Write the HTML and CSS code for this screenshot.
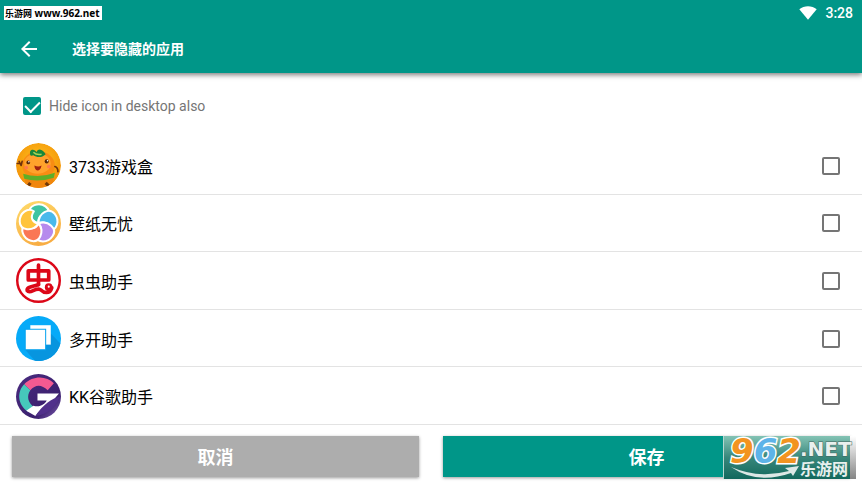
FILE: index.html
```
<!DOCTYPE html>
<html lang="zh-CN">

<head>
    <meta charset="UTF-8">
    <meta name="viewport" content="width=device-width, initial-scale=1.0">
    <title>选择要隐藏的应用</title>
    <link rel="stylesheet" href="styles.css">
</head>

<body>
    <header class="header">
        <div class="status">
            <span class="site"><span class="site-cn">乐游网</span> www.962.net</span>
            <div class="status-right">
                <svg class="wifi" viewBox="0 0 18 14" aria-hidden="true">
                    <path d="M0.3 3.2C5.2-.8 12.8-.8 17.7 3.2L9 13.8z" fill="#fff" />
                </svg>
                <span class="time">3:28</span>
            </div>
        </div>
        <div class="toolbar">
            <button type="button" class="back" aria-label="返回">
                <svg viewBox="0 0 24 24">
                    <path d="M20 11H7.83l5.59-5.59L12 4l-8 8 8 8 1.41-1.41L7.83 13H20v-2z" fill="#fff" />
                </svg>
            </button>
            <h1 class="title">选择要隐藏的应用</h1>
        </div>
    </header>

    <div class="option">
        <input type="checkbox" id="hideIcon" class="check" checked>
        <label for="hideIcon">Hide icon in desktop also</label>
    </div>

    <ul class="list">
        <li class="row">
            <svg class="icon" viewBox="0 0 44 44" aria-hidden="true">
                <defs>
                    <radialGradient id="orange" cx=".5" cy=".4" r=".6">
                        <stop offset="0" stop-color="#ffc31f" />
                        <stop offset="1" stop-color="#f39208" />
                    </radialGradient>
                    <clipPath id="round"><circle cx="22" cy="22" r="22" /></clipPath>
                </defs>
                <g clip-path="url(#round)">
                    <circle cx="22" cy="22" r="22" fill="url(#orange)" />
                    <path d="M9 31Q22 37 37 30L36 44H9z" fill="#f0860e" />
                    <ellipse cx="22" cy="22" rx="16" ry="14" fill="#f88c13" />
                    <ellipse cx="21" cy="20" rx="13" ry="10" fill="#ffa22c" />
                    <path d="M7 30Q22 35 38 29L37 34Q22 39 8 35z" fill="#5fae28" />
                    <path d="M14 12C12 5 19 6 20 9C22 4 27 7 29 11C25 15 20 14 17 12C16 12 15 13 14 12z" fill="#18873a" />
                    <path d="M17 9Q20 12 25 11" fill="none" stroke="#a6d456" stroke-width="1.5" />
                    <circle cx="12" cy="19" r="1.8" fill="#582709" />
                    <circle cx="30" cy="18" r="2" fill="#582709" />
                    <circle cx="12.6" cy="18.3" r=".7" fill="#fff" />
                    <circle cx="30.8" cy="17.3" r=".7" fill="#fff" />
                    <path d="M18 22Q22 24 25 22Q24 27 21 27Q18 26 18 22z" fill="#a22110" />
                    <circle cx="10" cy="24" r="1.8" fill="#ff7a4d" />
                    <circle cx="32" cy="23" r="1.8" fill="#ff7a4d" />
                    <path d="M5 22L3 18M4 20L1 20M5 22L6 18M38 23Q41 24 41 28" fill="none" stroke="#70310b" stroke-width="1.6" stroke-linecap="round" />
                    <path d="M12 42L14 39M29 39L32 42" stroke="#703909" stroke-width="3" />
                </g>
            </svg>
            <label class="name" for="app1">3733游戏盒</label>
            <input type="checkbox" id="app1" class="check">
        </li>
        <li class="row">
            <svg class="icon" viewBox="0 0 44 44" aria-hidden="true">
                <defs>
                    <linearGradient id="sun" x2=".4" y2="1">
                        <stop offset="0" stop-color="#ffdc6b" />
                        <stop offset="1" stop-color="#f8ad43" />
                    </linearGradient>
                    <path id="petal" d="M22 22C12 19 10 7 18 4C26 1 34 7 32 14C25 12 21 16 22 22z" />
                </defs>
                <circle cx="22" cy="22" r="22" fill="url(#sun)" />
                <g stroke="#fff" stroke-width="2" stroke-linejoin="round">
                    <use href="#petal" fill="#3fc4a2" />
                    <use href="#petal" fill="#49b9eb" transform="rotate(72 22 22)" />
                    <use href="#petal" fill="#b68aed" transform="rotate(144 22 22)" />
                    <use href="#petal" fill="#fa7755" transform="rotate(216 22 22)" />
                    <use href="#petal" fill="#ffc43c" transform="rotate(288 22 22)" />
                </g>
            </svg>
            <label class="name" for="app2">壁纸无忧</label>
            <input type="checkbox" id="app2" class="check">
        </li>
        <li class="row">
            <svg class="icon" viewBox="0 0 44 44" aria-hidden="true">
                <circle cx="22" cy="22" r="20.8" fill="#fff" stroke="#dc0718" stroke-width="2.4" />
                <g fill="none" stroke="#dc0718" stroke-width="3.6" stroke-linecap="round" stroke-linejoin="round">
                    <path d="M12 12.5H32V21.5H12zM22 7V26" />
                    <path d="M22 26C17 28 10 28 11 32C14 36 19 28 24 31C27 34 33 36 35 29" />
                </g>
                <circle cx="32" cy="28.5" r="3.8" fill="#dc0718" />
                <circle cx="32" cy="28" r="1" fill="#fff" />
            </svg>
            <label class="name" for="app3">虫虫助手</label>
            <input type="checkbox" id="app3" class="check">
        </li>
        <li class="row">
            <svg class="icon" viewBox="0 0 44 44" aria-hidden="true">
                <circle cx="22" cy="22" r="22" fill="#06aaf8" />
                <path d="M9 33L18.500 43.700A22 22 0 0 0 43.400 27L34 17L28 30z" fill="#0795df" />
                <path d="M14 9H34V28H14z" fill="#fff" />
                <path d="M9 13H29V33H9z" fill="#fff" stroke="#08a4ef" stroke-width="1" />
            </svg>
            <label class="name" for="app4">多开助手</label>
            <input type="checkbox" id="app4" class="check">
        </li>
        <li class="row">
            <svg class="icon" viewBox="0 0 44 44" aria-hidden="true">
                <defs>
                    <linearGradient id="violet" x2="1" y2="1">
                        <stop offset="0" stop-color="#4a2c80" />
                        <stop offset=".7" stop-color="#3b206e" />
                        <stop offset="1" stop-color="#8463b8" />
                    </linearGradient>
                </defs>
                <circle cx="22" cy="22" r="22" fill="url(#violet)" />
                <path d="M8 10C17 1 30 2 37 9L31 16C25 10 19 10 14 16z" fill="#f35a91" />
                <path d="M8 10L14 16C10 22 12 28 17 32L12 37C1 30 1 17 8 10z" fill="#46c8bb" />
                <path d="M21 19H42L37 25C29 30 24 35 19 41L10 36L17 31C23 33 28 30 30 26H21z" fill="#fff" />
                <path d="M43 22C35 24 26 30 19 41Q36 39 43 22z" fill="#51308b" />
            </svg>
            <label class="name" for="app5">KK谷歌助手</label>
            <input type="checkbox" id="app5" class="check">
        </li>
    </ul>

    <footer class="footer">
        <button type="button" class="btn cancel">取消</button>
        <button type="button" class="btn save">保存</button>
        <svg class="logo" viewBox="0 0 133 43" role="img" aria-label="962.NET 乐游网">
            <defs>
                <linearGradient id="panel" x2="0" y2="1">
                    <stop offset="0" stop-color="#83c3b4" />
                    <stop offset=".5" stop-color="#38877b" />
                    <stop offset="1" stop-color="#13685d" />
                </linearGradient>
                <linearGradient id="edge" x2="0" y2="1">
                    <stop offset="0" stop-color="#fff" />
                    <stop offset="1" stop-color="#858585" />
                </linearGradient>
            </defs>
            <path d="M127 0H133V43H127z" fill="url(#edge)" />
            <path d="M0 0H127V43H0z" fill="url(#panel)" />
            <path d="M.5 0V43" stroke="#b6d7d1" />
            <path d="M8 31Q36 43 66 35L62 32L76 30L70 40L68 37Q34 49 8 31z" fill="#dce7e5" />
            <text class="logo-num" x="7" y="27"><tspan fill="#f29420">9</tspan><tspan fill="#5eb3e8">6</tspan><tspan fill="#f29420">2</tspan></text>
            <text class="logo-net" x="77" y="20">.NET</text>
            <text class="logo-cn" x="77" y="39">乐游网</text>
        </svg>
    </footer>
</body>

</html>
```
FILE: styles.css
```
* {
    box-sizing: border-box;
}

body {
    margin: 0;
    min-height: 100vh;
    display: flex;
    flex-direction: column;
    background-color: #fff;
    font-family: Roboto, "Noto Sans CJK SC", sans-serif;
}

.header {
    background-color: #009688;
    color: #fff;
    box-shadow: 0 2px 5px rgba(0, 0, 0, 0.5);
}

.status {
    display: flex;
    justify-content: space-between;
    align-items: center;
    height: 25px;
    padding: 0 9px 0 4px;
}

.site {
    height: 14px;
    padding: 0 2px 0 1px;
    background-color: #fff;
    color: #000;
    font: bold 10px/14px "Noto Sans", "Noto Sans CJK SC", sans-serif;
}

.site-cn {
    font-size: 9px;
}

.status-right {
    display: flex;
    align-items: center;
    gap: 8px;
}

.wifi {
    width: 18px;
    height: 14px;
}

.time {
    font-size: 14px;
    font-weight: 500;
}

.toolbar {
    display: flex;
    align-items: center;
    gap: 31px;
    height: 48px;
    padding: 0 17px;
}

.back {
    display: flex;
    padding: 0;
    border: none;
    background: none;
}

.back svg {
    width: 24px;
    height: 24px;
}

.title {
    margin: 0;
    padding-bottom: 2px;
    font-size: 14px;
    font-weight: bold;
}

.option {
    display: flex;
    align-items: center;
    gap: 8px;
    height: 64px;
    padding: 2px 23px 0;
    color: #757575;
    font-size: 14px;
}

.check {
    appearance: none;
    flex: none;
    width: 18px;
    height: 18px;
    margin: 0;
    border: 2px solid #757575;
    border-radius: 2px;
}

.check:checked {
    border-color: #009688;
    background-color: #009688;
}

/* tick mark */
.check:checked::after {
    content: "";
    display: block;
    width: 7px;
    height: 12px;
    margin: -1px auto 0;
    border: solid #fff;
    border-width: 0 2px 2px 0;
    transform: rotate(45deg);
}

.list {
    flex: 1;
    display: flex;
    flex-direction: column;
    margin: 0;
    padding: 0;
    list-style: none;
}

.row {
    flex: 1;
    display: flex;
    align-items: center;
    gap: 8px;
    padding: 1px 22px 0 16px;
    border-bottom: 1px solid #e3e3e3;
}

.icon {
    flex: none;
    width: 45px;
    height: 45px;
}

.name {
    flex: 1;
    color: #000;
    font-size: 16px;
}

.footer {
    position: relative;
    display: flex;
    gap: 24px;
    padding: 11px 12px 8px;
}

.btn {
    flex: 1;
    height: 41px;
    padding: 0 0 2px;
    border: none;
    color: #fff;
    font-family: inherit;
    font-size: 18px;
    font-weight: bold;
    box-shadow: 0 1px 3px rgba(0, 0, 0, 0.4);
}

.cancel {
    background-color: #adadad;
}

.save {
    background-color: #009688;
}

.logo {
    position: absolute;
    right: 6px;
    bottom: 6px;
    width: 133px;
    height: 43px;
    overflow: visible;
}

.logo-num {
    font: italic bold 34px "DejaVu Sans", sans-serif;
    stroke: #fff;
    stroke-width: 3px;
    paint-order: stroke;
}

.logo-net {
    font: bold 20px "DejaVu Sans", sans-serif;
    fill: #e8f0ee;
    stroke: #42645e;
    stroke-width: 1px;
    paint-order: stroke;
}

.logo-cn {
    font: bold 16px "Noto Sans CJK SC", sans-serif;
    fill: #e8f0ee;
}
```
